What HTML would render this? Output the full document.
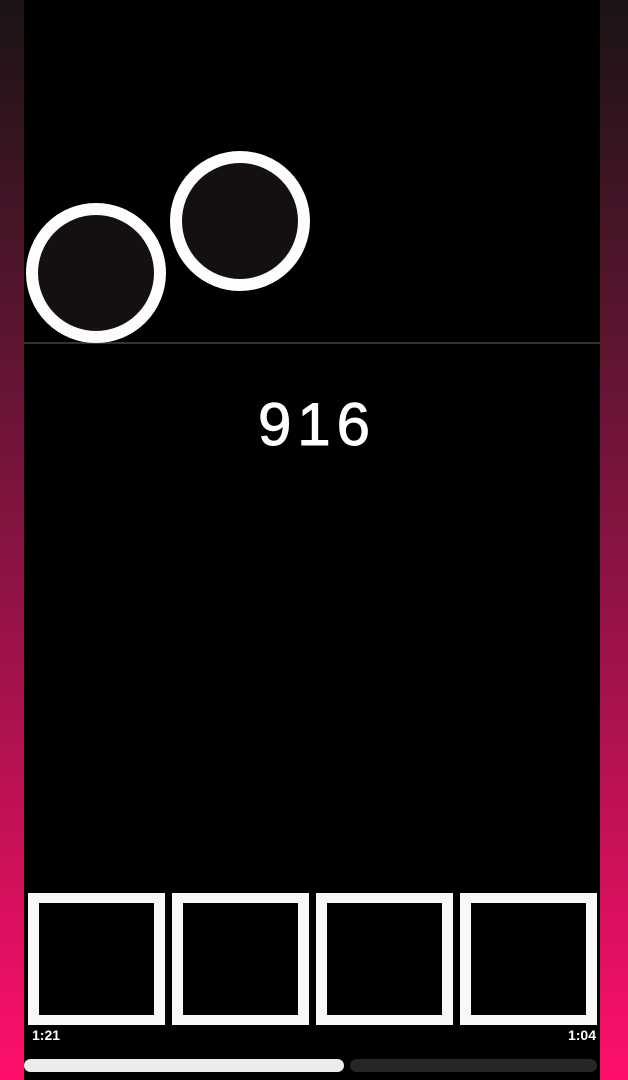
<!DOCTYPE html>
<html><head><style>
html,body{margin:0;padding:0}
body{width:628px;height:1080px;position:relative;overflow:hidden;background:linear-gradient(#1b1416 0%,#5a1530 30%,#a8124e 65%,#ff0f6c 100%);font-family:"Liberation Sans",sans-serif}
.main{position:absolute;left:24px;top:0;width:576px;height:1080px;background:#000}
.line{position:absolute;left:24px;top:342px;width:576px;height:2px;background:#333}
.c{position:absolute;width:116px;height:116px;border:12px solid #fdfdfb;border-radius:50%;background:#151010}
.num{position:absolute;left:0;width:628px;top:390px;text-align:center;color:#fff;font-size:60px;letter-spacing:6px;padding-left:6px;box-sizing:border-box;-webkit-text-stroke:1px #fff}
.sq{position:absolute;top:893px;width:115px;height:112px;border:11px solid #f8f8f6;border-top-width:10px;border-bottom-width:10px;background:#000}
.t{position:absolute;top:1027px;color:#fff;font-weight:bold;font-size:14px}
.bar{position:absolute;top:1059px;height:13px;border-radius:7px}
</style></head><body>
<div class="main"></div>
<div class="line"></div>
<div class="c" style="left:26px;top:203px"></div>
<div class="c" style="left:170px;top:151px"></div>
<div class="num">916</div>
<div class="sq" style="left:28px"></div>
<div class="sq" style="left:172px"></div>
<div class="sq" style="left:316px"></div>
<div class="sq" style="left:460px"></div>
<div class="t" style="left:32px">1:21</div>
<div class="t" style="right:32px">1:04</div>
<div class="bar" style="left:350px;width:247px;background:#262626"></div>
<div class="bar" style="left:24px;width:320px;background:#ececea"></div>
</body></html>
